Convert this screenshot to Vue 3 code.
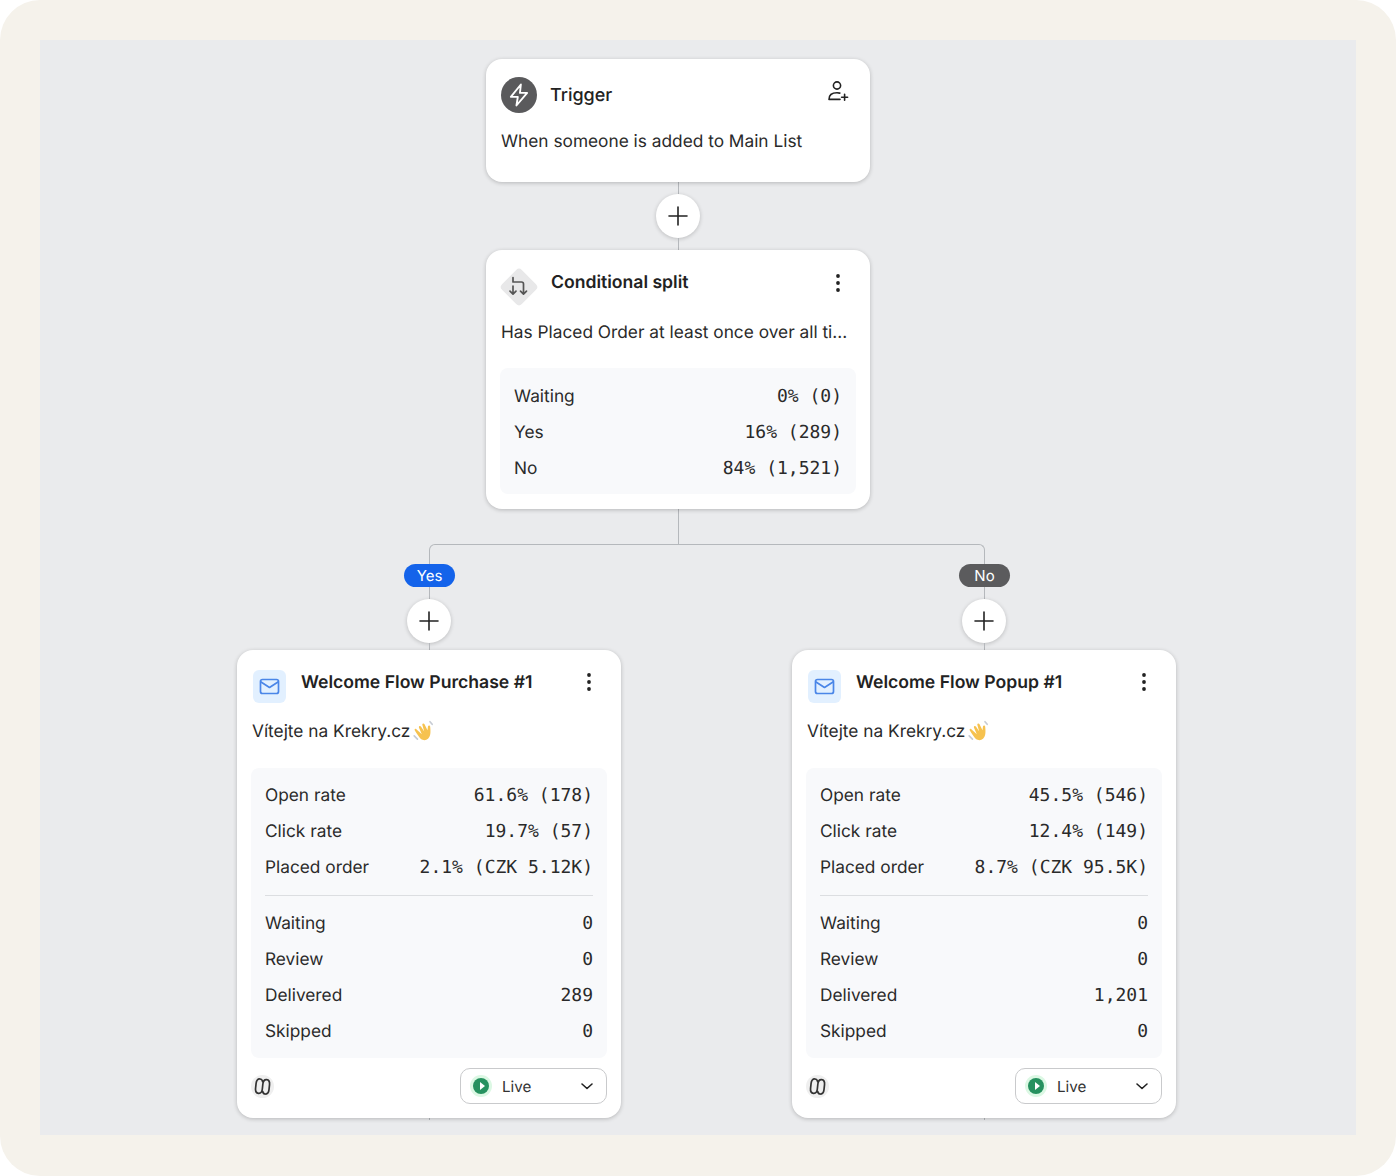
<template>
  <div class="frame">
    <div class="canvas">
      <div class="trunk">
        <div class="card">
          <div class="head">
            <span class="trigger-icon">
              <svg width="28" height="28" viewBox="0 0 24 24" fill="none" stroke="#fff" stroke-width="1.6" stroke-linejoin="round">
                <path d="M13.6 3 5 13.6h6L9.8 21 19 10.2h-6.2L13.6 3Z" />
              </svg>
            </span>
            <span class="title title-light">Trigger</span>
            <svg class="action" width="24" height="24" viewBox="0 0 24 24" fill="none" stroke="#222" stroke-width="1.6" stroke-linecap="round">
              <circle cx="11" cy="6.5" r="3.6" />
              <path d="M3 20.4c0-4.2 3-6.6 8-6.6 1 0 2 .1 2.8.3M3 20.4h11" />
              <path d="M18.6 15.2v6M15.6 18.2h6" />
            </svg>
          </div>
          <div class="desc trigger-desc">When someone is added to Main List</div>
        </div>
        <div class="stem stem-top"></div>
        <button class="plus"><svg width="22" height="22" viewBox="0 0 22 22" stroke="#222" stroke-width="1.6" stroke-linecap="round"><path d="M11 2v18M2 11h18" /></svg></button>
        <div class="stem stem-bottom"></div>
        <div class="card split-card">
          <div class="head">
            <svg class="split-icon" width="40" height="40" viewBox="0 0 40 40">
              <rect x="6" y="6" width="28" height="28" rx="4" fill="#e8e8e9" transform="rotate(45 20 20)" />
              <path d="M14 10.500v4.500h8.500a2 2 0 0 1 2 2v10M14 19v8M11 24.200l3 3 3-3M21.500 24.200l3 3 3-3" fill="none" stroke="#555" stroke-width="1.700" stroke-linecap="round" stroke-linejoin="round" />
            </svg>
            <span class="title">Conditional split</span>
            <svg class="action action-split" width="24" height="24" viewBox="0 0 24 24" fill="#222"><circle cx="12" cy="5" r="1.900" /><circle cx="12" cy="12" r="1.900" /><circle cx="12" cy="19" r="1.900" /></svg>
          </div>
          <div class="desc">Has Placed Order at least once over all ti...</div>
          <div class="stats split-stats">
            <div v-for="row in splitRows" :key="row[0]" class="row">
              <span>{{ row[0] }}</span><span class="num">{{ row[1] }}</span>
            </div>
          </div>
        </div>
        <div class="stem stem-down"></div>
      </div>
      <div class="rail"></div>
      <div class="branches">
        <div v-for="b in branches" :key="b.name" class="branch">
          <span class="pill" :class="b.pill">{{ b.label }}</span>
          <div class="stem stem-pill"></div>
          <button class="plus"><svg width="22" height="22" viewBox="0 0 22 22" stroke="#222" stroke-width="1.6" stroke-linecap="round"><path d="M11 2v18M2 11h18" /></svg></button>
          <div class="stem stem-bottom-small"></div>
          <div class="card">
            <div class="head">
              <span class="mail-icon">
                <svg width="21" height="21" viewBox="0 0 21 21" fill="none" stroke="#4a86e8" stroke-width="1.7" stroke-linejoin="round" stroke-linecap="round">
                  <rect x="1.5" y="3.5" width="18" height="14" rx="2" />
                  <path d="M2 6l8.5 5.5L19 6" />
                </svg>
              </span>
              <span class="title">{{ b.name }}</span>
              <svg class="action" width="24" height="24" viewBox="0 0 24 24" fill="#222"><circle cx="12" cy="5" r="1.900" /><circle cx="12" cy="12" r="1.900" /><circle cx="12" cy="19" r="1.900" /></svg>
            </div>
            <div class="desc mail-desc">
              Vítejte na Krekry.cz
              <svg class="wave" width="24" height="24" viewBox="0 0 22 22">
                <path d="M4 8.5 9 13l-2.600-6c-.5-1.400 1-2 1.800-1l3 4.500-1.700-6c-.3-1.400 1.300-1.800 2-.7l2.700 5.700.4-3.500c.2-1.400 2-1.300 2.100.2.200 2.500.5 5-.1 7.600-.7 3.300-3.700 5.500-6.800 4.400-2.200-.7-3.500-2.600-7.200-8.500-.8-1.300.7-2.100 1.400-1.200Z" fill="#f6c24f" />
                <path d="M2 14.500l3 3M16.500 1.500l2 2.500" fill="none" stroke="#c7ccd4" stroke-width="1.500" stroke-linecap="round" />
              </svg>
            </div>
            <div class="stats">
              <div v-for="row in b.rates" :key="row[0]" class="row">
                <span>{{ row[0] }}</span><span class="num">{{ row[1] }}</span>
              </div>
              <div class="divider"></div>
              <div v-for="row in b.counts" :key="row[0]" class="row">
                <span>{{ row[0] }}</span><span class="num">{{ row[1] }}</span>
              </div>
            </div>
            <div class="foot">
              <span class="link-icon">
                <svg width="19" height="19" viewBox="0 0 19 19" fill="none" stroke="#333" stroke-width="1.700" stroke-linecap="round" stroke-linejoin="round">
                  <g transform="rotate(6 9.500 9.500)">
                    <path d="M9.200 4.800C8.700 3.200 7.500 2.300 6.200 2.300 4 2.300 2.800 4.200 2.800 7v5c0 2.900 1.400 4.700 3.400 4.700s3.400-1.800 3.400-4.700V7c0-2.800 1.300-4.700 3.300-4.700s3.400 1.800 3.400 4.700v5c0 2.800-1.300 4.700-3.300 4.700-1.300 0-2.400-.9-2.900-2.500" />
                  </g>
                </svg>
              </span>
              <div class="status">
                <span class="live-dot"><i></i></span>
                <span class="live-text">Live</span>
                <svg width="14" height="14" viewBox="0 0 14 14" fill="none" stroke="#222" stroke-width="1.600" stroke-linecap="round" stroke-linejoin="round"><path d="M2 5l5 4.500L12 5" /></svg>
              </div>
            </div>
          </div>
          <div class="stem stem-tail"></div>
        </div>
      </div>
    </div>
  </div>
</template>

<script setup>
const splitRows = [
  ['Waiting', '0% (0)'],
  ['Yes', '16% (289)'],
  ['No', '84% (1,521)']
]

const branches = [
  {
    label: 'Yes',
    pill: 'pill-yes',
    name: 'Welcome Flow Purchase #1',
    rates: [
      ['Open rate', '61.6% (178)'],
      ['Click rate', '19.7% (57)'],
      ['Placed order', '2.1% (CZK 5.12K)']
    ],
    counts: [
      ['Waiting', '0'],
      ['Review', '0'],
      ['Delivered', '289'],
      ['Skipped', '0']
    ]
  },
  {
    label: 'No',
    pill: 'pill-no',
    name: 'Welcome Flow Popup #1',
    rates: [
      ['Open rate', '45.5% (546)'],
      ['Click rate', '12.4% (149)'],
      ['Placed order', '8.7% (CZK 95.5K)']
    ],
    counts: [
      ['Waiting', '0'],
      ['Review', '0'],
      ['Delivered', '1,201'],
      ['Skipped', '0']
    ]
  }
]
</script>

<style>
html, body {
  background: #fff;
}
</style>

<style scoped>
.frame {
  box-sizing: border-box;
  width: 1396px;
  height: 1176px;
  padding: 40px;
  background: #f5f2eb;
  border-radius: 40px;
  font-family: Inter, "Liberation Sans", sans-serif;
  color: #2a2a2a;
  text-rendering: geometricPrecision;
}
.canvas {
  height: 1095px;
  padding-top: 19px;
  box-sizing: border-box;
  background: #eaebed;
  overflow: hidden;
}
.trunk {
  display: flex;
  flex-direction: column;
  align-items: flex-start;
  width: 384px;
  margin-left: 446px;
}
.card {
  box-sizing: border-box;
  width: 384px;
  padding: 14px;
  background: #fff;
  border-radius: 16px;
  box-shadow: 0 1px 4px rgba(0, 0, 0, 0.22);
  position: relative;
}
.split-card {
  padding-bottom: 15px;
}
.head {
  display: flex;
  align-items: flex-start;
  height: 46px;
  padding-left: 1px;
}
.title {
  flex: 1;
  margin-top: 1px;
  font-size: 17.6px;
  font-weight: 600;
  line-height: 36px;
  color: #222;
}
.title-light {
  font-size: 18px;
  font-weight: 500;
  margin-top: 5px;
}
.action {
  margin: 6px 6px 0 0;
}
.action-split {
  margin-top: 7px;
}
.trigger-icon {
  width: 36px;
  height: 36px;
  margin: 4px 13px 0 0;
  border-radius: 50%;
  background: #5a5a5c;
  display: flex;
  align-items: center;
  justify-content: center;
}
.split-icon {
  margin: 3px 12px 0 -2px;
}
.mail-icon {
  width: 33px;
  height: 33px;
  margin: 6px 15px 0 1px;
  border-radius: 6px;
  background: #e2f0ff;
  display: flex;
  align-items: center;
  justify-content: center;
  flex: none;
}
.desc {
  margin-top: 11px;
  padding-left: 1px;
  font-size: 17.3px;
  line-height: 24px;
  white-space: nowrap;
}
.trigger-desc {
  padding-bottom: 14px;
}
.mail-desc {
  margin-top: 10px;
  display: flex;
  align-items: center;
  gap: 2px;
}
.wave {
  flex: none;
}
.stats {
  margin-top: 24px;
  padding: 9px 14px;
  background: #f8f9fb;
  border-radius: 8px;
}
.split-stats {
  margin-top: 23px;
  padding-top: 10px;
  padding-bottom: 8px;
}
.row {
  display: flex;
  justify-content: space-between;
  align-items: center;
  height: 36px;
  font-size: 17.3px;
}
.num {
  font-family: "DejaVu Sans Mono", "Liberation Mono", monospace;
  font-size: 18px;
  color: #2a2a2a;
}
.divider {
  height: 1px;
  margin: 10px 0 9px;
  background: #dcdee1;
}
.foot {
  display: flex;
  align-items: center;
  justify-content: space-between;
  margin-top: 10px;
}
.link-icon {
  width: 23px;
  height: 23px;
  border-radius: 50%;
  background: #efefef;
  display: flex;
  align-items: center;
  justify-content: center;
}
.status {
  box-sizing: border-box;
  display: flex;
  align-items: center;
  width: 147px;
  height: 36px;
  padding: 0 12px 0 9px;
  border: 1px solid #c9cacc;
  border-radius: 10px;
  font-size: 15.2px;
  color: #333;
}
.live-dot {
  width: 22px;
  height: 22px;
  border-radius: 50%;
  background: #dcf8e4;
  display: flex;
  align-items: center;
  justify-content: center;
}
.live-dot i {
  width: 16px;
  height: 16px;
  border-radius: 50%;
  background: #26915f;
  display: flex;
  align-items: center;
  justify-content: center;
}
.live-dot i::after {
  content: "";
  margin-left: 2px;
  border-left: 5px solid #fff;
  border-top: 4px solid transparent;
  border-bottom: 4px solid transparent;
}
.live-text {
  flex: 1;
  margin-left: 10px;
}
.stem {
  width: 1px;
  margin-left: 192px;
  background: #b5b8bc;
}
.stem-top {
  height: 12px;
}
.stem-bottom {
  height: 12px;
}
.stem-down {
  height: 35px;
}
.stem-pill {
  height: 12px;
}
.stem-bottom-small {
  height: 7px;
}
.stem-tail {
  height: 2px;
}
.plus {
  width: 44px;
  height: 44px;
  margin-left: 170px;
  padding: 0;
  border: none;
  border-radius: 50%;
  background: #fff;
  box-shadow: 0 1px 4px rgba(0, 0, 0, 0.2);
  display: flex;
  align-items: center;
  justify-content: center;
}
.rail {
  box-sizing: border-box;
  width: 556px;
  height: 20px;
  margin-left: 389px;
  border: 1px solid #b5b8bc;
  border-bottom: none;
  border-radius: 6px 6px 0 0;
}
.branches {
  display: flex;
  gap: 171px;
  margin-left: 197px;
}
.branch {
  display: flex;
  flex-direction: column;
  align-items: flex-start;
  width: 384px;
}
.pill {
  box-sizing: border-box;
  width: 51px;
  height: 23px;
  margin-left: 167px;
  border-radius: 12px;
  color: #fff;
  font-size: 15px;
  line-height: 23px;
  text-align: center;
}
.pill-yes {
  background: #1463ea;
}
.pill-no {
  background: #5b5b5d;
}
</style>
